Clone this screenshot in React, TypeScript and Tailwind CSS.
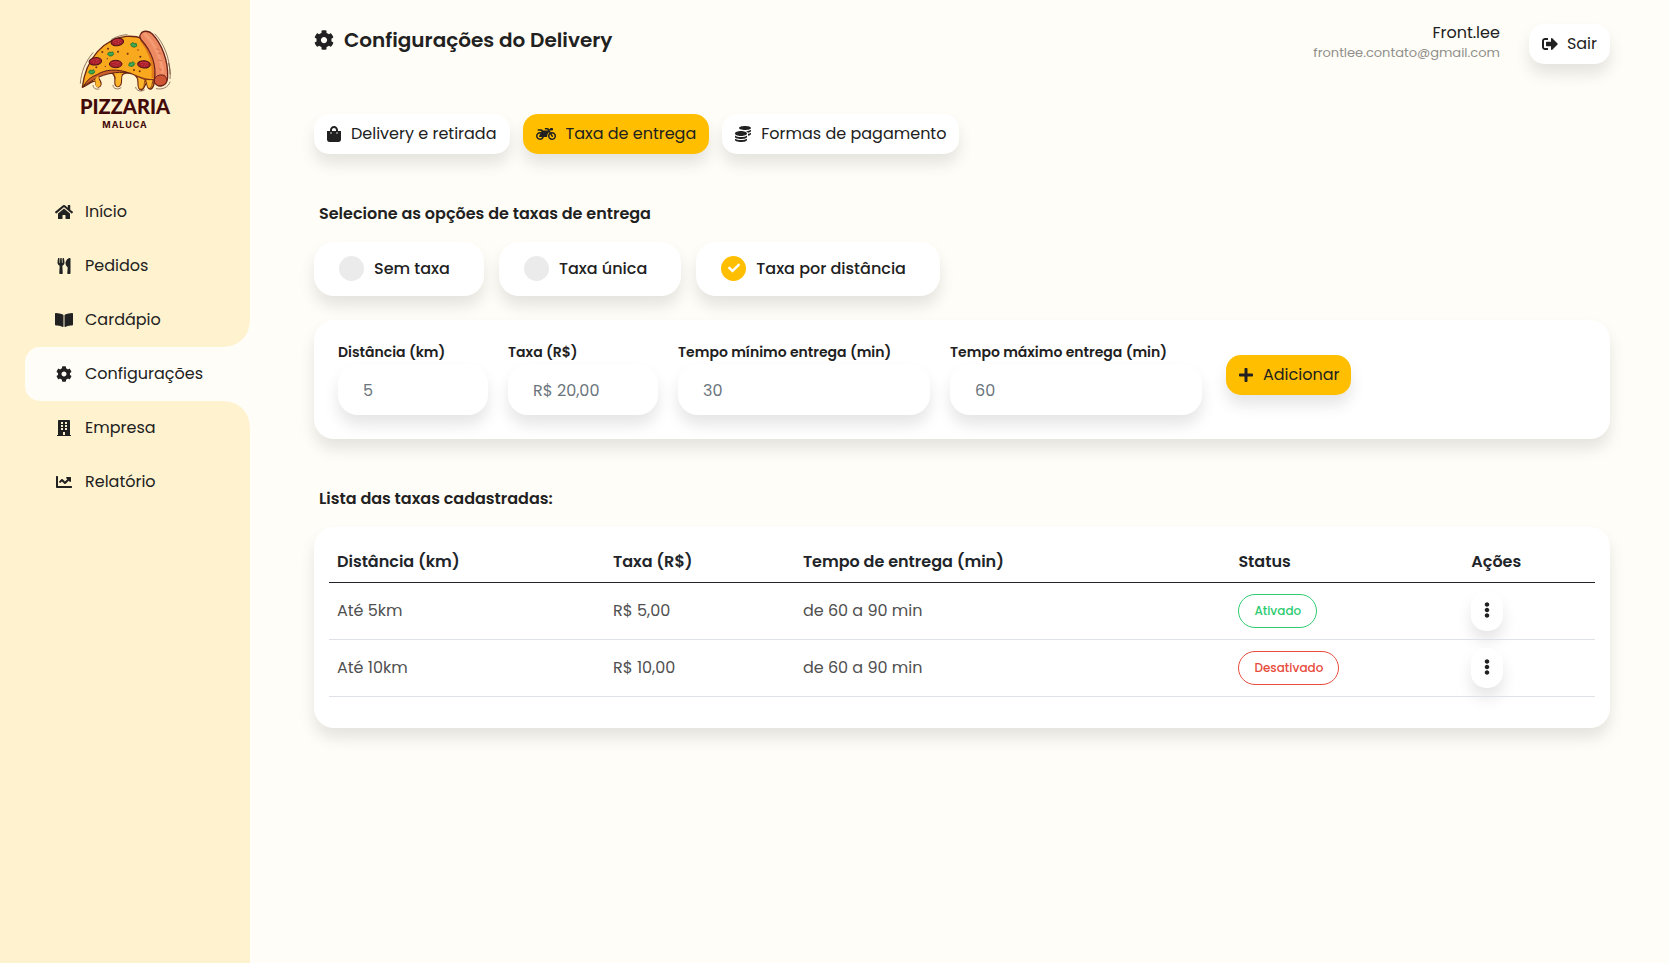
import React, { useState } from "react";
import {
  FaHome,
  FaUtensils,
  FaBookOpen,
  FaCog,
  FaBuilding,
  FaChartLine,
  FaShoppingBag,
  FaMotorcycle,
  FaCoins,
  FaSignOutAlt,
  FaPlus,
  FaCheck,
  FaEllipsisV,
} from "react-icons/fa";
import type { IconType } from "react-icons";

const shadow = "shadow-[0_10px_15px_rgba(0,0,0,0.1)]";

const navItems: { label: string; icon: IconType; size: string }[] = [
  { label: "Início", icon: FaHome, size: "size-[18px]" },
  { label: "Pedidos", icon: FaUtensils, size: "size-4" },
  { label: "Cardápio", icon: FaBookOpen, size: "size-[18px]" },
  { label: "Configurações", icon: FaCog, size: "size-4" },
  { label: "Empresa", icon: FaBuilding, size: "size-4" },
  { label: "Relatório", icon: FaChartLine, size: "size-4" },
];

const tabs: { label: string; icon: IconType; size: string }[] = [
  { label: "Delivery e retirada", icon: FaShoppingBag, size: "h-4 w-[14px]" },
  { label: "Taxa de entrega", icon: FaMotorcycle, size: "size-5" },
  { label: "Formas de pagamento", icon: FaCoins, size: "size-4" },
];

const feeTypes = ["Sem taxa", "Taxa única", "Taxa por distância"];

const fields = [
  { id: "distancia", label: "Distância (km)", placeholder: "5", width: "w-[150px]" },
  { id: "taxa", label: "Taxa (R$)", placeholder: "R$ 20,00", width: "w-[150px]" },
  { id: "minimo", label: "Tempo mínimo entrega (min)", placeholder: "30", width: "w-[252px]" },
  { id: "maximo", label: "Tempo máximo entrega (min)", placeholder: "60", width: "w-[252px]" },
];

const rows = [
  { distance: "Até 5km", fee: "R$ 5,00", time: "de 60 a 90 min", active: true },
  { distance: "Até 10km", fee: "R$ 10,00", time: "de 60 a 90 min", active: false },
];

function Pepperoni({ x, y, r = 0 }: { x: number; y: number; r?: number }) {
  return (
    <g transform={`translate(${x} ${y}) rotate(${r})`}>
      <ellipse rx="19" ry="11" fill="#a91f2c" stroke="#4a1216" strokeWidth="3" />
      <path d="M-12 -4Q0 -9 12 -4" fill="none" stroke="#c8323c" strokeWidth="3" />
      <path d="M-7 1h3M3 -1h3M0 5h3M9 3h2" stroke="#dd6663" strokeWidth="2" />
    </g>
  );
}

function Leaf({ x, y, r = 0 }: { x: number; y: number; r?: number }) {
  return (
    <g transform={`translate(${x} ${y}) rotate(${r})`}>
      <path d="M-10 1L-5 -6L1 -5L6 -7L10 0L4 6L-4 6Z" fill="#2f9a49" stroke="#2c6f2e" strokeWidth="2" />
      <path d="M-6 1L6 -1" stroke="#5fc068" strokeWidth="2" />
    </g>
  );
}

function PizzaLogo() {
  return (
    <svg viewBox="0 0 300 198" className="h-[66px] w-[100px]" aria-hidden="true">
      <g strokeLinecap="round" strokeLinejoin="round">
        <path
          d="M22 184C26 146 40 108 68 76C92 50 122 34 154 31C172 30 188 32 204 38C232 66 246 112 238 170C234 190 226 192 220 186C216 180 218 174 214 172C210 174 208 190 200 192C188 192 190 176 189 164C188 154 182 148 172 144C158 138 144 142 141 148C137 158 142 166 137 176C131 186 119 182 120 170C121 158 120 148 112 142C98 138 78 144 70 152C70 162 84 168 76 180C68 188 60 178 62 166C54 162 38 178 22 184Z"
          fill="#f9a91e"
          stroke="#6b2613"
          strokeWidth="4"
        />
        <path d="M26 180C34 164 48 152 66 146C90 130 126 128 160 140C124 136 90 144 66 156C52 162 38 174 26 180Z" fill="#c9602c" stroke="#5b2012" strokeWidth="3" />
        <path d="M182 148C204 158 226 162 238 160L236 172L222 170L212 168L196 164Z" fill="#c9602c" stroke="#6b2613" strokeWidth="2" />
        <path d="M62 156C62 170 58 180 68 184C82 180 76 170 72 162L70 150ZM124 144C124 160 116 176 128 182C140 178 137 164 140 146Z" fill="#fcb52a" />
        <path d="M186 152C194 168 184 188 198 190C210 186 206 174 210 162ZM212 162C218 176 214 186 224 187C232 184 230 174 234 162Z" fill="#fcb52a" stroke="#6b2613" strokeWidth="2" />
        <path d="M200 44C222 70 238 110 234 152" fill="none" stroke="#e07a1c" strokeWidth="9" />
        <path
          d="M197 24C204 12 222 14 232 24C260 54 280 102 278 154C276 186 242 188 238 164C246 118 228 74 199 42C194 36 193 30 197 24Z"
          fill="#ee8a61"
          stroke="#6b2118"
          strokeWidth="4"
        />
        <path d="M209 24C238 50 260 98 263 138" fill="none" stroke="#f49b74" strokeWidth="9" />
        <path d="M238 164C238 150 254 144 267 148C276 154 278 166 270 174C260 182 239 182 238 164Z" fill="#cf5634" stroke="#6b2118" strokeWidth="3" />
        <path d="M244 68l9 4M250 82l8 0M250 102l10 2M252 128l8 4" stroke="#c55e42" strokeWidth="2" />
        <path
          d="M16 172C18 140 30 108 54 80M110 40C124 32 138 27 156 26M240 24C266 52 284 92 285 144M281 112C286 130 287 144 285 158M244 188C262 192 280 184 285 168M54 178C54 188 64 191 72 189M114 178C114 190 130 192 138 185M182 184C184 196 200 198 208 192"
          fill="none"
          stroke="#5f3a2c"
          strokeWidth="2"
        />
      </g>
      <g fill="#713015">
        <circle cx="99" cy="68" r="3" />
        <circle cx="129" cy="77" r="3" />
        <circle cx="158" cy="83" r="3" />
        <circle cx="82" cy="78" r="3" />
        <circle cx="189" cy="72" r="2" />
        <circle cx="196" cy="92" r="3" />
        <circle cx="64" cy="124" r="3" />
        <circle cx="194" cy="136" r="3" />
        <circle cx="91" cy="121" r="2" />
        <circle cx="97" cy="98" r="2" />
        <circle cx="177" cy="132" r="3" />
      </g>
      <Pepperoni x={127} y={48} r={-8} />
      <Pepperoni x={61} y={106} r={-8} />
      <Pepperoni x={122} y={114} />
      <Pepperoni x={207} y={115} r={4} />
      <Leaf x={107} y={84} />
      <Leaf x={176} y={57} r={20} />
      <Leaf x={170} y={115} r={-15} />
      <Leaf x={50} y={138} />
    </svg>
  );
}

function Sidebar() {
  return (
    <aside className="flex w-[250px] shrink-0 flex-col bg-[#fff2cf]">
      <div className="flex h-[185px] flex-col items-center pt-[26px] text-[#430a0a]">
        <PizzaLogo />
        <span className="pt-0.5 font-['Lato',sans-serif] text-xl leading-6 font-black">PIZZARIA</span>
        <span className="font-['Inter',sans-serif] text-[9px] leading-[14px] font-bold tracking-widest">MALUCA</span>
      </div>
      <nav className="flex flex-col pl-[25px]">
        {navItems.map(({ label, icon: Icon, size }) => {
          const active = label === "Configurações";
          return (
            <a
              key={label}
              href="#"
              aria-current={active ? "page" : undefined}
              className={`relative flex h-[54px] items-center gap-[11px] pb-px pl-[29px] ${active ? "rounded-l-[15px] bg-[#fffdf7]" : ""}`}
            >
              {active && (
                <>
                  <span className="absolute right-0 bottom-full size-[25px] bg-[radial-gradient(circle_at_0_0,transparent_24px,#fffdf7_25px)]" />
                  <span className="absolute top-full right-0 size-[25px] bg-[radial-gradient(circle_at_0_100%,transparent_24px,#fffdf7_25px)]" />
                </>
              )}
              <span className="flex w-5 justify-center">
                <Icon className={size} />
              </span>
              {label}
            </a>
          );
        })}
      </nav>
    </aside>
  );
}

export default function App() {
  const [feeType, setFeeType] = useState("Taxa por distância");

  return (
    <div className="flex min-h-screen bg-[#fffdf7] font-['Poppins','Inter',sans-serif] text-base text-[#212121]">
      <Sidebar />
      <main className="min-w-0 flex-1 pt-6 pr-[59px] pl-16">
        <header className="flex h-[90px] items-start justify-between">
          <h1 className="flex items-center gap-[10px] text-xl leading-8 font-semibold">
            <FaCog className="size-5" />
            Configurações do Delivery
          </h1>
          <div className="flex items-start gap-[29px]">
            <div className="text-right">
              <p className="leading-[18px]">Front.lee</p>
              <p className="text-[13px] leading-[22px] text-[#8f8f8b]">frontlee.contato@gmail.com</p>
            </div>
            <button type="button" className={`flex h-10 items-center gap-[9px] rounded-[15px] bg-white px-[13px] ${shadow}`}>
              <FaSignOutAlt className="size-4" />
              Sair
            </button>
          </div>
        </header>

        <div className="flex gap-[13px]">
          {tabs.map(({ label, icon: Icon, size }) => (
            <button
              key={label}
              type="button"
              className={`flex h-10 items-center gap-[10px] rounded-[15px] px-[13px] ${shadow} ${label === "Taxa de entrega" ? "bg-[#ffbf00]" : "bg-white"}`}
            >
              <Icon className={size} />
              {label}
            </button>
          ))}
        </div>

        <fieldset className="mt-12">
          <legend className="pl-[5px] leading-6 font-semibold">Selecione as opções de taxas de entrega</legend>
          <div className="mt-4 flex gap-[15px]">
            {feeTypes.map((type) => (
              <label
                key={type}
                className={`flex h-[54px] cursor-pointer items-center gap-[10px] rounded-[20px] bg-white pr-[34px] pl-[25px] font-medium ${shadow}`}
              >
                <span className="mb-0.5 grid size-[25px] place-items-center">
                  <input
                    type="radio"
                    name="fee-type"
                    checked={feeType === type}
                    onChange={() => setFeeType(type)}
                    className="col-start-1 row-start-1 size-[25px] appearance-none rounded-full bg-[#ebebeb] checked:bg-[#ffbf00]"
                  />
                  {feeType === type && <FaCheck className="pointer-events-none col-start-1 row-start-1 size-3 text-white" />}
                </span>
                {type}
              </label>
            ))}
          </div>
        </fieldset>

        <form className={`mt-6 flex flex-wrap items-start gap-x-5 rounded-[20px] bg-white px-6 pt-[22px] pb-6 ${shadow}`}>
          {fields.map((f) => (
            <div key={f.id} className={f.width}>
              <label htmlFor={f.id} className="block h-[22px] text-sm leading-5 font-semibold whitespace-nowrap">
                {f.label}
              </label>
              <input
                id={f.id}
                type="text"
                placeholder={f.placeholder}
                className={`block h-[51px] w-full rounded-[20px] bg-white px-[25px] pt-0.5 placeholder:text-[#6c757d] ${shadow}`}
              />
            </div>
          ))}
          <button type="button" className={`mt-[13px] ml-1 flex h-10 items-center gap-[9px] rounded-[15px] bg-[#ffbf00] px-3 ${shadow}`}>
            <FaPlus className="size-4" />
            Adicionar
          </button>
        </form>

        <h2 className="mt-12 pl-[5px] leading-6 font-semibold">Lista das taxas cadastradas:</h2>
        <section className={`mt-4 rounded-[20px] bg-white px-[15px] pt-[15px] pb-[31px] ${shadow}`}>
          <table className="w-full table-fixed text-left">
            <colgroup>
              <col className="w-[21.8%]" />
              <col className="w-[15%]" />
              <col className="w-[34.4%]" />
              <col className="w-[18.4%]" />
              <col />
            </colgroup>
            <thead>
              <tr className="h-10 border-b border-[#212529]">
                {["Distância (km)", "Taxa (R$)", "Tempo de entrega (min)", "Status", "Ações"].map((h) => (
                  <th key={h} scope="col" className="px-2 font-semibold text-[#212529]">
                    {h}
                  </th>
                ))}
              </tr>
            </thead>
            <tbody>
              {rows.map((row) => (
                <tr key={row.distance} className="h-[57px] border-b border-[#dee2e6] text-[#505050]">
                  <td className="px-2">{row.distance}</td>
                  <td className="px-2">{row.fee}</td>
                  <td className="px-2">{row.time}</td>
                  <td className="px-2">
                    <span
                      className={`inline-flex h-[34px] items-center rounded-full border px-[15px] align-middle text-xs font-medium ${row.active ? "border-[#2ecc71] text-[#2ecc71]" : "border-[#e74c3c] text-[#e74c3c]"}`}
                    >
                      {row.active ? "Ativado" : "Desativado"}
                    </span>
                  </td>
                  <td className="px-2">
                    <button
                      type="button"
                      aria-label="Ações"
                      className={`flex h-10 w-8 items-center justify-center rounded-[15px] bg-white pb-0.5 text-[#212121] ${shadow}`}
                    >
                      <FaEllipsisV className="size-4" />
                    </button>
                  </td>
                </tr>
              ))}
            </tbody>
          </table>
        </section>
      </main>
    </div>
  );
}
